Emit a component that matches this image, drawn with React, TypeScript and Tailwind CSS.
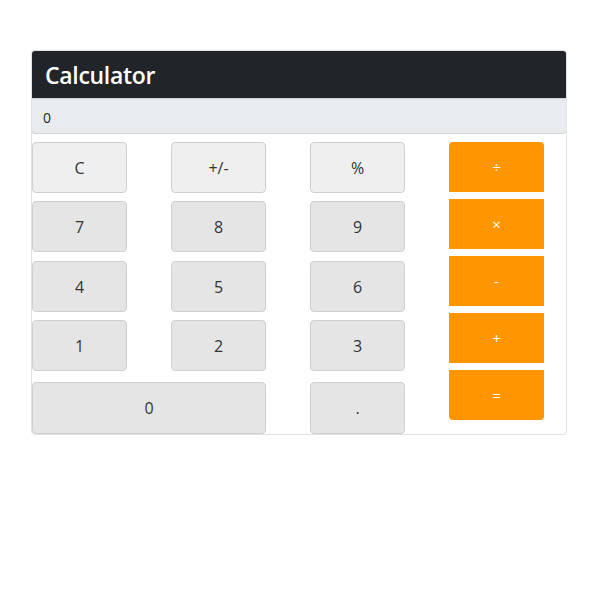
const font = { fontFamily: '"Open Sans", "Noto Sans", sans-serif' };

const rows = [
  ['C', '+/-', '%'],
  ['7', '8', '9'],
  ['4', '5', '6'],
  ['1', '2', '3'],
];

const ops = ['÷', '×', '-', '+', '='];

export default function App() {
  return (
    <div className="w-[600px] h-[600px] bg-white pt-[50px] pl-[31px]" style={font}>
      <div className="w-[536px] h-[385px] border border-[#dee2e6] rounded-[4px] overflow-hidden">
        {/* Header */}
        <div className="h-[48px] bg-[#212529] flex items-center pl-[14px] pt-[2px] -mt-px -mx-px">
          <h1 className="text-white text-[23px] font-semibold tracking-[-0.3px]">Calculator</h1>
        </div>

        {/* Display */}
        <div className="h-[36px] bg-[#e9ecef] border border-[#ced4da] rounded-b-[4px] -mx-px flex items-center pl-[11px] pt-[2px] text-[14px] text-[#212529]">
          0
        </div>

        {/* Keypad */}
        <div className="flex pt-[8px]">
          <div className="flex flex-col w-[373px]">
            {rows.map((row, i) => (
              <div key={i} className={`flex gap-[44px] ${i === 0 ? '' : i === 2 ? 'mt-[9px]' : 'mt-[8px]'}`}>
                {row.map((k) => (
                  <button
                    key={k}
                    className={`w-[95px] h-[51px] rounded-[4px] border border-[#cfcfcf] text-[16px] text-[#333] ${i === 0 ? 'bg-[#efefef]' : 'bg-[#e5e5e5]'}`}
                  >
                    {k}
                  </button>
                ))}
              </div>
            ))}
            <div className="flex gap-[44px] mt-[11px]">
              <button className="w-[234px] h-[52px] rounded-[4px] border border-[#cfcfcf] bg-[#e5e5e5] text-[16px] text-[#333]">
                0
              </button>
              <button className="w-[95px] h-[52px] rounded-[4px] border border-[#cfcfcf] bg-[#e5e5e5] text-[16px] text-[#333]">
                .
              </button>
            </div>
          </div>

          <div className="flex flex-col gap-[7px] ml-[44px]">
            {ops.map((op, i) => (
              <button
                key={op}
                className={`w-[95px] h-[50px] bg-[#ff9500] text-white text-[15px] ${i === 0 ? 'rounded-t-[4px]' : ''} ${i === ops.length - 1 ? 'rounded-b-[4px]' : ''}`}
              >
                {op}
              </button>
            ))}
          </div>
        </div>
      </div>
    </div>
  );
}
